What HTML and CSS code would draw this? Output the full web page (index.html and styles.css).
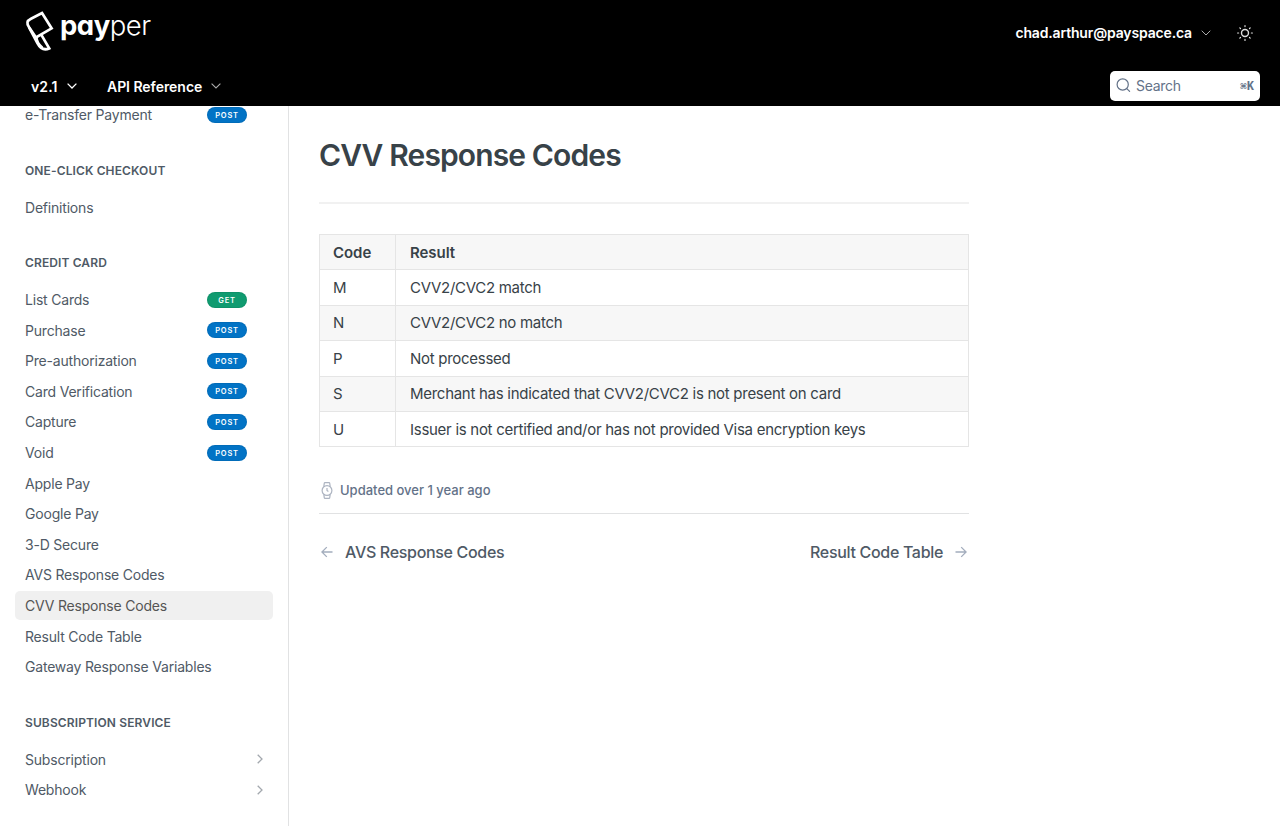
FILE: index.html
```html
<!DOCTYPE html>
<html lang="en">
<head>
<meta charset="utf-8">
<title>CVV Response Codes</title>
<link rel="stylesheet" href="styles.css">
</head>
<body>
<header class="header">
  <div class="bar bar-top">
    <a class="logo">
      <svg class="logo-mark" width="30" height="42" viewBox="0 0 30 42" fill="none" stroke="#fff" stroke-width="2.7"><path d="M17 3 L26.6 18.3 L11 27.4 L4.2 17.6 C1.2 13.2 2 10.8 6 8.8 Z"/><path d="M4.2 17.6 L12.4 33 C15.5 39 19 40.6 24.2 38.4 L16.2 24.6"/><path stroke-width="2" d="M11.8 27 C11.6 31 14 34.5 17.5 37.5"/></svg>
      <span class="logo-text"><b>pay</b>per</span>
    </a>
    <div class="account">
      <span class="email">chad.arthur@payspace.ca</span>
      <svg class="chev-user" width="10" height="6" viewBox="0 0 10 6" fill="none" stroke="#aaa" stroke-width="1"><path d="M.7.7 5 5 9.3.7"/></svg>
      <svg class="sun" width="16" height="16" viewBox="0 0 16 16" fill="none" stroke="#ddd" stroke-width="1.4"><circle cx="8" cy="8" r="3.5"/><path stroke-width="1.2" stroke-linecap="round" d="M8 .6v1M8 14.4v1M.6 8h1M14.4 8h1M2.8 2.8l.7.7M12.5 12.5l.7.7M2.8 13.2l.7-.7M12.5 3.5l.7-.7"/></svg>
    </div>
  </div>
  <div class="bar bar-nav">
    <span class="nav-item version">v2.1</span>
    <svg class="chev-version" width="10" height="6" viewBox="0 0 10 6" fill="none" stroke="#fff" stroke-width="1.3"><path d="M.6.6 5 5 9.4.6"/></svg>
    <span class="nav-item reference">API Reference</span>
    <svg class="chev-ref" width="10" height="6" viewBox="0 0 10 6" fill="none" stroke="#aaa" stroke-width="1.1"><path d="M.6.6 5 5 9.4.6"/></svg>
    <div class="search">
      <svg class="search-icon" width="15" height="15" viewBox="0 0 15 15" fill="none" stroke="#637288" stroke-width="1.2" stroke-linecap="round"><circle cx="6.7" cy="6.5" r="5.6"/><path d="M10.8 10.6 13.6 13.4"/></svg>
      <span class="search-label">Search</span>
      <span class="search-key"><span class="cmd">⌘</span>K</span>
    </div>
  </div>
</header>
<div class="layout">
  <nav class="sidebar">
    <div class="sidebar-scroll">
      <a class="item"><span>e-Transfer Payment</span><span class="badge post">POST</span></a>
      <h2 class="group">ONE-CLICK CHECKOUT</h2>
      <a class="item"><span>Definitions</span></a>
      <h2 class="group">CREDIT CARD</h2>
      <a class="item"><span>List Cards</span><span class="badge get">GET</span></a>
      <a class="item"><span>Purchase</span><span class="badge post">POST</span></a>
      <a class="item"><span>Pre-authorization</span><span class="badge post">POST</span></a>
      <a class="item"><span>Card Verification</span><span class="badge post">POST</span></a>
      <a class="item"><span>Capture</span><span class="badge post">POST</span></a>
      <a class="item"><span>Void</span><span class="badge post">POST</span></a>
      <a class="item"><span>Apple Pay</span></a>
      <a class="item"><span>Google Pay</span></a>
      <a class="item"><span>3-D Secure</span></a>
      <a class="item"><span>AVS Response Codes</span></a>
      <a class="item active"><span>CVV Response Codes</span></a>
      <a class="item"><span>Result Code Table</span></a>
      <a class="item"><span>Gateway Response Variables</span></a>
      <h2 class="group">SUBSCRIPTION SERVICE</h2>
      <a class="item"><span>Subscription</span><svg class="chev-item" width="6" height="10" viewBox="0 0 6 10" fill="none" stroke="#a3a8ae" stroke-width="1.3"><path d="M.7.7 5 5 .7 9.3"/></svg></a>
      <a class="item"><span>Webhook</span><svg class="chev-item" width="6" height="10" viewBox="0 0 6 10" fill="none" stroke="#a3a8ae" stroke-width="1.3"><path d="M.7.7 5 5 .7 9.3"/></svg></a>
    </div>
  </nav>
  <main class="content">
    <h1 class="title">CVV Response Codes</h1>
    <table class="codes">
      <thead><tr><th class="code">Code</th><th>Result</th></tr></thead>
      <tbody>
        <tr><td>M</td><td>CVV2/CVC2 match</td></tr>
        <tr><td>N</td><td>CVV2/CVC2 no match</td></tr>
        <tr><td>P</td><td>Not processed</td></tr>
        <tr><td>S</td><td>Merchant has indicated that CVV2/CVC2 is not present on card</td></tr>
        <tr><td>U</td><td>Issuer is not certified and/or has not provided Visa encryption keys</td></tr>
      </tbody>
    </table>
    <div class="updated">
      <svg width="12" height="17" viewBox="0 0 12 17" fill="none" stroke="#adb4c1" stroke-width="1.2" stroke-linejoin="round"><circle cx="6" cy="8.5" r="4.9"/><path d="M2.8 4.6 3.3 1.2Q3.4.6 4 .6H8Q8.6.6 8.7 1.2L9.2 4.6M2.8 12.4 3.3 15.8Q3.4 16.4 4 16.4H8Q8.6 16.4 8.7 15.8L9.2 12.4M6 6v2.6l1.4 1"/></svg>
      <span>Updated over 1 year ago</span>
    </div>
    <div class="pager">
      <a class="page-link prev"><svg width="12" height="12" viewBox="0 0 12 12" fill="none" stroke="#a3adbd" stroke-width="1.3"><path d="M11.5 6H1M5.8 1.1.9 6l4.9 4.9"/></svg><span>AVS Response Codes</span></a>
      <a class="page-link next"><span>Result Code Table</span><svg width="12" height="12" viewBox="0 0 12 12" fill="none" stroke="#a3adbd" stroke-width="1.3"><path d="M.5 6H11M6.2 1.1 11.1 6l-4.9 4.9"/></svg></a>
    </div>
  </main>
</div>
</body>
</html>
```

FILE: styles.css
```css
* { box-sizing: border-box; }
body { margin: 0; height: 826px; overflow: hidden; background: #fff; font-family: Inter, "Liberation Sans", sans-serif; color: #384248; display: flex; flex-direction: column; }
.header { height: 106px; flex: none; background: #000; color: #fff; }
.bar { display: flex; align-items: center; }
.bar-top { height: 66px; padding: 0 27px 0 25px; justify-content: space-between; }
.logo { display: flex; height: 46px; }
.logo-mark { flex: none; }
.logo-text { font-family: Inter, sans-serif; font-feature-settings: "cv11"; font-size: 27.5px; line-height: 30px; margin-left: 5px; font-weight: 300; letter-spacing: -.5px; }
.logo-text b { font-weight: 700; }
.account { display: flex; align-items: center; height: 64px; margin-bottom: 1px; }
.email { font-size: 14px; font-weight: 600; letter-spacing: -.16px; }
.chev-user { margin-left: 9px; }
.sun { margin-left: 26px; }
.bar-nav { height: 40px; padding: 0 20px 0 31px; }
.nav-item { font-size: 14px; font-weight: 600; line-height: 20px; margin-top: 2px; }
.chev-version { margin-left: 9.5px; }
.reference { margin-left: 30px; letter-spacing: -.04px; }
.version { letter-spacing: .1px; }
.chev-ref { margin-left: 9px; }
.search { margin-left: auto; width: 150px; height: 30px; background: #fff; border-radius: 5px; display: flex; align-items: center; padding: 0 6px; color: #637288; }
.search-icon { margin-bottom: 1px; }
.search-label { font-size: 14px; line-height: 18px; margin-left: 5px; margin-bottom: 1px; letter-spacing: -.3px; }
.search-key { margin-left: auto; font-family: "Liberation Mono", monospace; font-size: 12px; font-weight: 700; line-height: 16px; padding-top: 1px; display: flex; align-items: center; }
.cmd { font-family: "DejaVu Sans", sans-serif; font-size: 8px; }
.layout { flex: 1; display: flex; min-height: 0; }
.sidebar { width: 289px; flex: none; border-right: 1px solid #e1e2e3; overflow: hidden; padding: 0 15px; }
.sidebar-scroll { margin-top: -6px; }
.item { display: flex; align-items: center; height: 29.6px; margin-bottom: 1px; padding: 0 10px; border-radius: 5px; font-size: 14px; letter-spacing: -.2px; color: #4f5a66; }
.item.active { background: #f0f0f0; color: #555; }
.group { margin: 0; padding: 32.4px 10px 13.4px; font-size: 12px; line-height: 16px; font-weight: 600; letter-spacing: .12px; color: #4f5a66; }
.badge { margin-left: auto; margin-right: 16px; width: 40px; height: 16px; border-radius: 8px; color: #fff; font-size: 7.5px; line-height: 17px; font-weight: 600; letter-spacing: .75px; text-align: center; box-shadow: inset 0 0 0 1px rgba(0,0,0,.06); }
.post { background: #0273c5; }
.get { background: #109b70; }
.chev-item { margin-left: auto; }
.content { width: 650px; margin-left: 30px; }
.title { margin: 0; padding: 29px 0 27px; height: 98px; border-bottom: 2px solid #f1f1f1; font-size: 30px; line-height: 40px; font-weight: 600; letter-spacing: -.88px; }
.codes { width: 650px; margin-top: 30px; border-collapse: collapse; table-layout: fixed; font-size: 15px; line-height: 20px; letter-spacing: -.28px; }
.codes th, .codes td { border: 1px solid #e5e5e5; height: 35.4px; padding: 1px 13px 0; text-align: left; }
.codes th + th, .codes td + td { padding-left: 14px; }
.codes th { font-weight: 600; letter-spacing: -.05px; }
.codes .code { width: 76px; }
.codes thead, .codes tbody tr:nth-child(even) { background: #f7f7f7; }
.updated { display: flex; align-items: center; height: 20px; margin-top: 33px; padding-left: 2px; gap: 7px; font-size: 13px; font-weight: 500; color: #637288; }
.pager { margin-top: 13px; padding-top: 28px; border-top: 1px solid #e1e2e3; display: flex; justify-content: space-between; }
.page-link { display: flex; align-items: center; gap: 12px; font-size: 16px; line-height: 20px; font-weight: 500; letter-spacing: -.32px; color: #4f5a66; }
.prev { padding-left: 2px; }
.next { padding-right: 2px; }
```
